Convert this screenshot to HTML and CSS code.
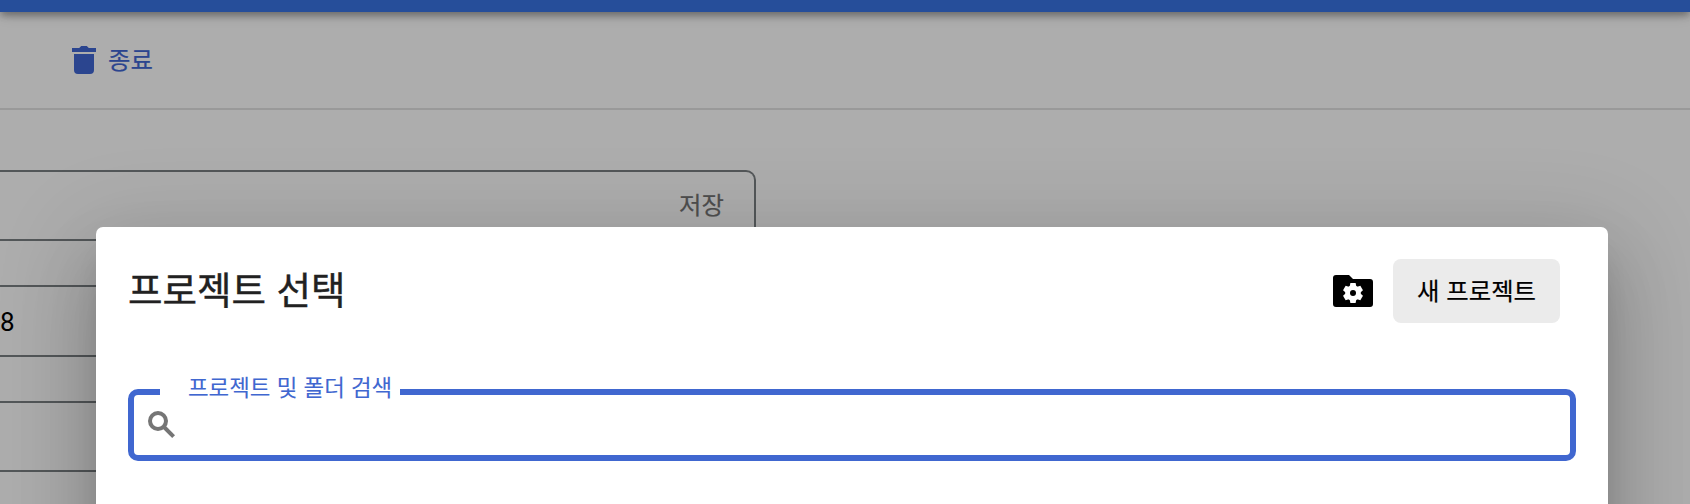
FILE: index.html
```html
<!DOCTYPE html>
<html lang="ko">
<head>
<meta charset="utf-8">
<title>프로젝트 선택</title>
<link rel="stylesheet" href="styles.css">
</head>
<body>
<div class="page">
  <header class="topbar"></header>
  <div class="toolbar">
    <button class="end-button">
      <svg class="end-icon" viewBox="0 0 18 18"><path d="M15 3v2H3V3h3.6L7.6 2h2.8l1 1zM4 6h10v8a2 2 0 0 1-2 2H6a2 2 0 0 1-2-2z"/></svg>
      <span class="end-text">종료</span>
    </button>
  </div>
  <main class="form">
    <div class="field"><span class="save">저장</span></div>
    <div class="field field-tall"><span class="value">8</span></div>
    <div class="field"></div>
  </main>
</div>
<section class="dialog">
  <div class="dialog-header">
    <h1 class="title">프로젝트 선택</h1>
    <svg class="folder-icon" viewBox="0 0 24 24">
      <path d="M3.5 4H10l2 2h8.5A1.5 1.5 0 0 1 22 7.5v11a1.5 1.5 0 0 1-1.5 1.5h-17A1.5 1.5 0 0 1 2 18.500v-13A1.5 1.5 0 0 1 3.5 4z"/>
      <g transform="translate(12 13)" fill="#fff">
        <circle r="3.9"/>
        <path d="M-1.7-3-1.3-5H1.3L1.7-3V3L1.3 5H-1.3L-1.7 3z"/>
        <path transform="rotate(60)" d="M-1.7-3-1.3-5H1.3L1.7-3V3L1.3 5H-1.3L-1.7 3z"/>
        <path transform="rotate(120)" d="M-1.7-3-1.3-5H1.3L1.7-3V3L1.3 5H-1.3L-1.7 3z"/>
        <circle r="1.5" fill="#000"/>
      </g>
    </svg>
    <button class="new-project"><span class="new-text">새 프로젝트</span></button>
  </div>
  <div class="search">
    <label class="search-label"><span class="label-text">프로젝트 및 폴더 검색</span></label>
    <svg class="search-icon" viewBox="0 0 28 28"><circle cx="10" cy="10" r="8"/><path d="M15.5 15.5 25.6 25.6"/></svg>
  </div>
</section>
</body>
</html>
```
FILE: styles.css
```css
* { box-sizing: border-box; }
html { height: 504px; overflow: hidden; }
body {
  margin: 0;
  height: 504px;
  position: relative;
  overflow: hidden;
  background: #adadad;
  font-family: "Noto Sans CJK KR", sans-serif;
}
button { border: 0; padding: 0; margin: 0; font: inherit; background: none; }
.topbar {
  height: 12px;
  background: #264e9a;
  box-shadow: 0 4px 8px -2px rgba(0,0,0,.28), 0 4px 6px rgba(0,0,0,.14), 0 2px 16px rgba(0,0,0,.12);
}
.toolbar {
  height: 98px;
  padding: 30px 0 0 66px;
  border-bottom: 2px solid #999;
}
.end-button { display: flex; align-items: flex-start; height: 36px; gap: 6px; color: #2b458f; }
.end-icon { width: 36px; height: 36px; fill: currentColor; }
.end-text, .save, .new-text { font-size: 24.4px; -webkit-text-stroke: .2px currentColor; }
.end-text { line-height: 34px; }
.form { display: flex; flex-direction: column; gap: 44px; width: 756px; padding-top: 60px; }
.field {
  display: flex;
  align-items: center;
  height: 71px;
  border: 2px solid #535759;
  border-left: 0;
  border-radius: 0 10px 10px 0;
}
.field-tall { height: 72px; }
.save { margin-left: auto; padding: 0 30px 3px 0; line-height: 36px; color: #4f4f4f; }
.value { padding-top: 2px; font: 26px/36px Roboto, sans-serif; color: #000; }
.dialog {
  position: absolute;
  left: 96px;
  right: 82px;
  top: 227px;
  height: 700px;
  padding: 32px;
  border-radius: 7px;
  background: #fff;
  box-shadow: 0 22px 30px -14px rgba(0,0,0,.2), 0 48px 76px 6px rgba(0,0,0,.14), 0 18px 92px 16px rgba(0,0,0,.12);
}
.dialog-header { display: flex; align-items: center; height: 64px; padding-right: 16px; }
.title {
  margin: 0 auto 0 0;
  padding-bottom: 6px;
  font-size: 37.5px;
  font-weight: 400;
  line-height: 58px;
  color: #212121;
  -webkit-text-stroke: .4px currentColor;
}
.folder-icon { width: 48px; height: 48px; margin-right: 16px; }
.new-project { width: 167px; height: 64px; padding-bottom: 2px; border-radius: 8px; background: #ebebeb; color: #000; }
.new-text { display: block; line-height: 62px; }
.search {
  position: relative;
  display: flex;
  height: 72px;
  margin-top: 66px;
  padding: 16px 14px;
  border: 6px solid #4067d0;
  border-radius: 10px;
}
.search-label {
  position: absolute;
  left: 26px;
  top: -25px;
  width: 240px;
  height: 32px;
  padding-left: 28px;
  background: #fff;
  color: #4067d0;
}
.label-text { display: block; font-size: 22.4px; line-height: 32px; white-space: nowrap; -webkit-text-stroke: .1px currentColor; }
.search-icon { width: 28px; height: 28px; fill: none; stroke: #757575; stroke-width: 4; }
```
